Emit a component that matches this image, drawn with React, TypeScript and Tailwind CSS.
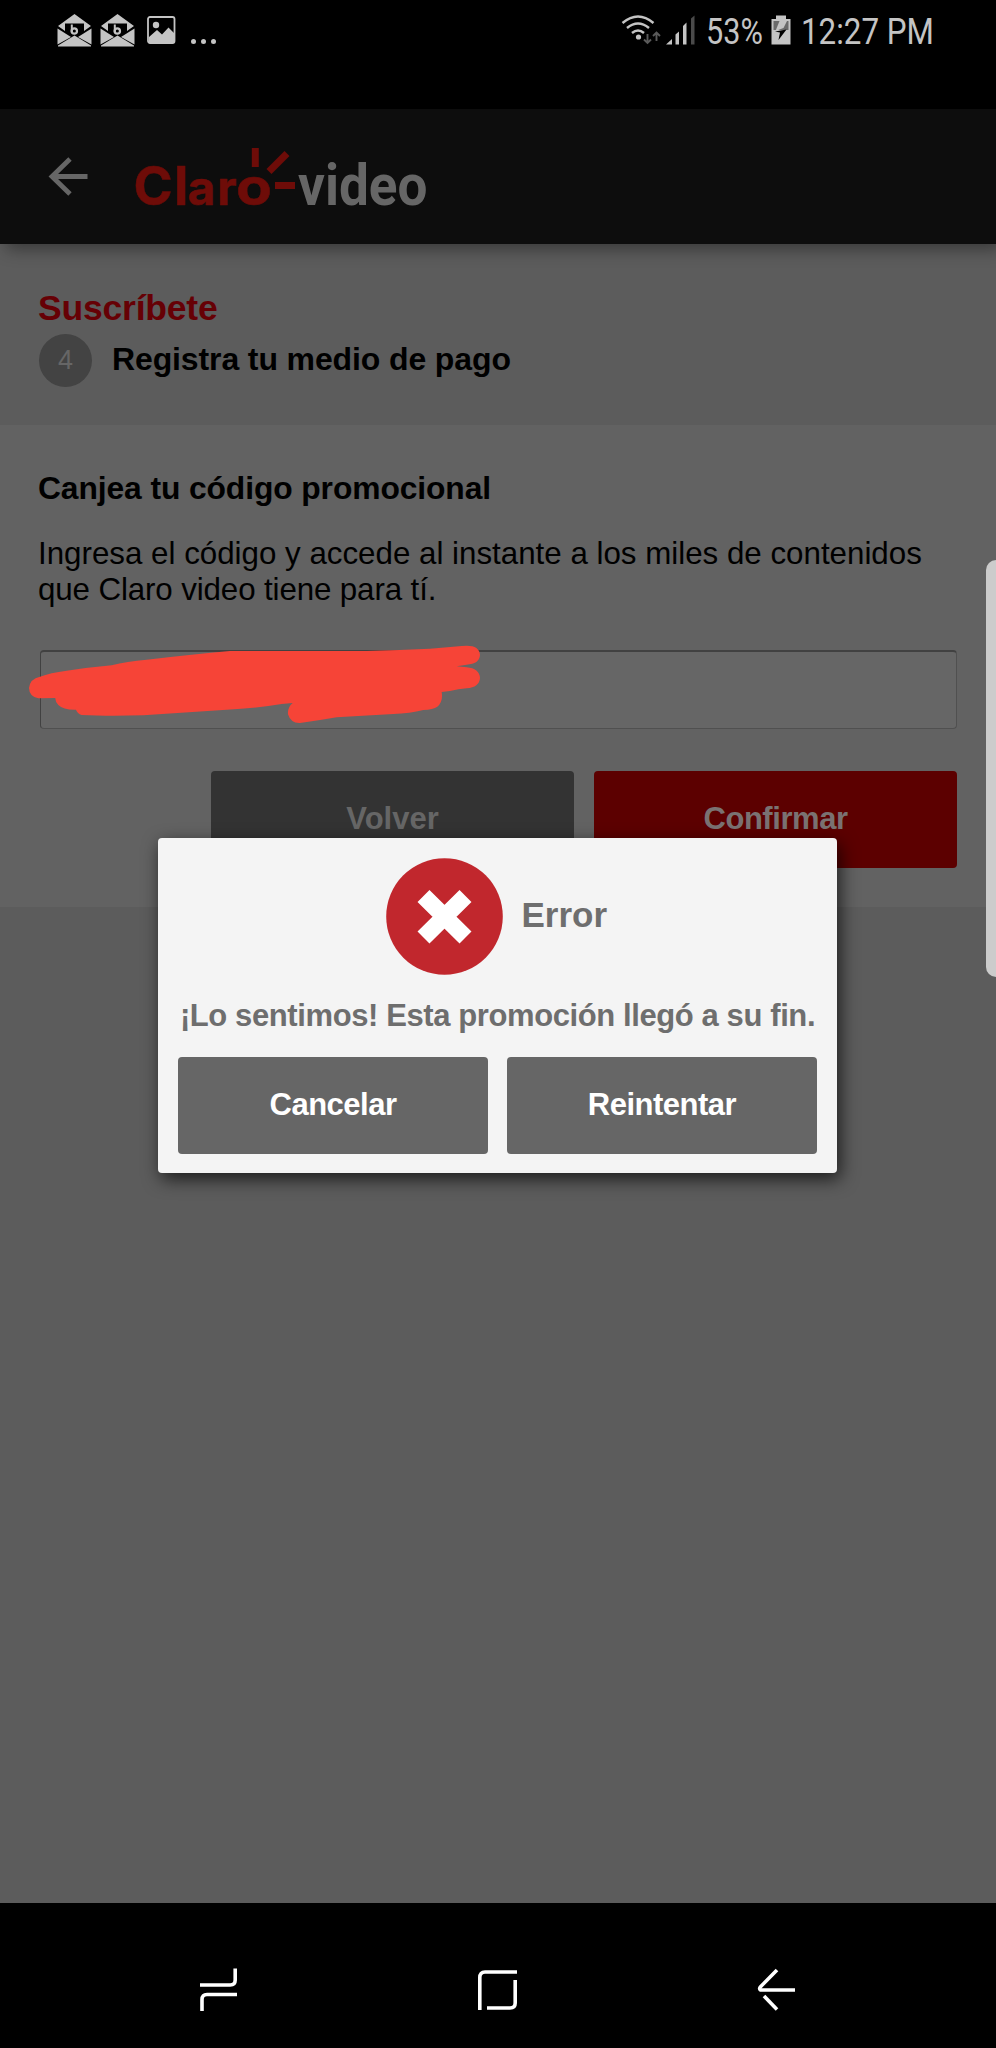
import { ReactNode } from "react"

function EnvelopeIcon() {
  return (
    <svg width="35" height="33" viewBox="0 0 35 33" fill="#c4c4c4">
      <path d="M17.5 0 L34 12 L27 17 V9.500 H8 V17 L1 12 Z" />
      <path d="M0.500 14.500 L14 23 L0.500 30.500 Z" />
      <path d="M34.500 14.500 L21 23 L34.500 30.500 Z" />
      <path d="M1 32.500 V31.500 L17.500 21.500 L34 31.500 V32.500 Z" />
      <path d="M14.800 10.500 V18" fill="none" stroke="#c4c4c4" strokeWidth="2" />
      <circle cx="17.300" cy="17" r="2.700" fill="none" stroke="#c4c4c4" strokeWidth="2.200" />
    </svg>
  )
}

function GalleryIcon() {
  return (
    <svg width="29" height="28" viewBox="0 0 29 28">
      <rect x="1" y="1" width="26.500" height="26" rx="2" fill="none" stroke="#c4c4c4" strokeWidth="1.800" />
      <circle cx="9" cy="9" r="3.200" fill="#c4c4c4" />
      <path d="M2 21 L10 14 L15 18.500 L21.500 11.500 L27 17 V26 H2 Z" fill="#c4c4c4" />
    </svg>
  )
}

function StatusIcons() {
  return (
    <svg className="absolute left-[621px] top-0" width="76" height="60" viewBox="0 0 76 60" fill="none">
      <g stroke="#c4c4c4" strokeWidth="2.500">
        <path d="M1.500 23 Q17 10 32.500 23" />
        <path d="M6 28 Q17 19 28 28" />
        <path d="M11 33 Q17 28 23 33" />
      </g>
      <circle cx="17.500" cy="37" r="2.600" fill="#c4c4c4" />
      <g stroke="#5a5a5a" strokeWidth="1.900">
        <path d="M26.500 34 V43 M23 39.500 L26.500 43 L30 39.500" />
        <path d="M35.500 41 V32.500 M32 36 L35.500 32.500 L39 36" />
      </g>
      <path d="M45 44.500 L51 39 V44.500 Z" fill="#c4c4c4" />
      <path d="M54.500 34.500 L58 31.500 V44.500 H54.500 Z" fill="#c4c4c4" />
      <path d="M62 26 L65.500 22.500 V44.500 H62 Z" fill="#c4c4c4" />
      <path d="M70 18.500 L73.500 15.500 V44.500 H70 Z" fill="#4a4a4a" />
    </svg>
  )
}

function BatteryIcon() {
  return (
    <svg className="absolute left-[771px] top-[15px]" width="20" height="30" viewBox="0 0 20 30">
      <path d="M5 0.500 H15 V4 H19.500 V29.500 H0.500 V4 H5 Z" fill="#c4c4c4" />
      <path d="M2.500 6 H17.500 V15 H2.500 Z" fill="#6a6a6a" />
      <path d="M8.500 6 L16 6 L12.500 13 L4.500 16 Z" fill="#c4c4c4" />
      <path d="M4 16.500 L15.500 14.500 L7.500 25 L9 17.500 Z" fill="#000" />
    </svg>
  )
}

function StatusBar() {
  return (
    <div className="relative h-[109px] bg-black font-[Roboto,sans-serif] text-[36px] leading-[64px] text-[#c4c4c4]">
      <div className="flex pl-[57px] pt-[14px]">
        <EnvelopeIcon />
        <div className="w-[8px]" />
        <EnvelopeIcon />
        <div className="w-[12px]" />
        <div className="pt-[2px]">
          <GalleryIcon />
        </div>
        <div className="ml-[15px] mt-[25px] flex gap-[5px]">
          <span className="size-[5px] rounded-full bg-[#c4c4c4]" />
          <span className="size-[5px] rounded-full bg-[#c4c4c4]" />
          <span className="size-[5px] rounded-full bg-[#c4c4c4]" />
        </div>
      </div>
      <StatusIcons />
      <span className="absolute left-[706px] top-0 origin-left scale-x-[0.85]">53%</span>
      <BatteryIcon />
      <span className="absolute left-[801px] top-0 origin-left scale-x-[0.87] whitespace-nowrap">12:27 PM</span>
    </div>
  )
}

function Logo() {
  return (
    <svg width="320" height="120" viewBox="130 115 320 120">
      <g fill="#6e0c08" stroke="#6e0c08" fontFamily="Inter, sans-serif" fontSize="48" fontWeight="700" strokeWidth="0.5">
        <text y="204.500" x="133.500" fontSize="53">C</text>
        <text y="204.500" x="174" fontSize="53">l</text>
        <text y="204.500" x="187.500">a</text>
        <text y="204.500" x="217">r</text>
        <text y="204.500" x="236" textLength="36" lengthAdjust="spacingAndGlyphs" fontSize="52">o</text>
      </g>
      <g stroke="#6e0c08" strokeWidth="7">
        <path d="M255.300 148 V167" />
        <path d="M269 171.500 L287 153.500" />
        <path d="M275 185.500 H295" />
      </g>
      <text x="298" y="204.500" textLength="129.500" lengthAdjust="spacingAndGlyphs" fill="#666" fontFamily="Roboto, sans-serif" fontSize="57" fontWeight="700">
        video
      </text>
    </svg>
  )
}

function Header() {
  return (
    <header className="relative z-10 flex h-[135px] bg-[#0d0d0d] pl-[48px] shadow-[6px_5px_16px_rgba(0,0,0,0.4)]">
      <svg className="mt-[48px]" width="40" height="40" viewBox="0 0 40 40" fill="none" stroke="#666" strokeWidth="4.800">
        <path d="M39.500 19.500 H4 M22 2 L4 19.500 L22 37" />
      </svg>
      <div className="ml-[42px] mt-[6px]">
        <Logo />
      </div>
    </header>
  )
}

function ModalButton({ children }: { children: ReactNode }) {
  return (
    <button className="h-[97px] flex-1 rounded-[4px] bg-[#666] text-[31px] font-bold tracking-[-0.5px] text-white">
      {children}
    </button>
  )
}

function ErrorModal() {
  return (
    <div className="absolute left-[158px] top-[838px] z-20 h-[335px] w-[679px] rounded-[4px] bg-[#f4f4f4] px-5 pt-5 text-[#6e6e6e] shadow-[3px_6px_18px_rgba(0,0,0,0.7)]">
      <div className="flex items-center pl-[208px]">
        <svg width="117" height="117" viewBox="0 0 117 117">
          <circle cx="58.500" cy="58.500" r="58.300" fill="#c1272d" />
          <path d="M37.500 38 L79.500 79.500 M79.500 38 L37.500 79.500" stroke="#fff" strokeWidth="17" />
        </svg>
        <h2 className="ml-[18.500px] pb-[3px] text-[35px] font-bold">Error</h2>
      </div>
      <p className="mt-[21px] whitespace-nowrap text-center text-[31px] leading-[40px] font-bold tracking-[-0.4px]">
        ¡Lo sentimos! Esta promoción llegó a su fin.
      </p>
      <div className="mt-[21px] flex gap-[19px]">
        <ModalButton>Cancelar</ModalButton>
        <ModalButton>Reintentar</ModalButton>
      </div>
    </div>
  )
}

function Scribble() {
  return (
    <svg className="absolute left-0 top-[620px] z-10" width="500" height="130" viewBox="0 0 1500 390">
      <path
        fill="#f64437"
        d="M120 170 Q150 158 200 152 Q270 142 335 136 Q380 124 440 119 Q580 103 690 93 L1100 93 Q1200 90 1290 86 L1385 78 Q1438 72 1440 105 Q1438 132 1400 134 L1370 139 L1400 142 Q1438 145 1440 174 Q1438 202 1400 205 L1375 208 Q1350 215 1325 216 Q1330 245 1312 260 Q1300 268 1270 270 Q1230 280 1180 282 L1010 292 Q960 301 900 309 Q872 310 864 283 Q862 262 878 249 L845 252 Q760 266 680 269 L430 286 Q320 289 245 285 Q232 280 228 269 Q190 270 175 255 Q165 244 166 234 L115 235 Q88 230 87 204 Q90 176 120 170 Z"
      />
    </svg>
  )
}

function NavBar() {
  return (
    <div className="flex h-[145px] items-start bg-black pl-[199px] pt-[64px]">
      <svg width="40" height="46" viewBox="0 0 40 46" fill="none" stroke="#fff" strokeWidth="3.600">
        <path d="M36.200 1.500 V13 Q36.200 18 31.200 18 H1" />
        <path d="M38 27.500 H8 Q3 27.500 3 32.500 V44" />
      </svg>
      <svg className="ml-[238px]" width="42" height="46" viewBox="0 0 42 46" fill="none" stroke="#fff" strokeWidth="3.600">
        <path d="M40 5 H8 Q2.800 5 2.800 10.500 V43" />
        <path d="M38.200 13 V36 Q38.200 41 33 41 H10" />
      </svg>
      <svg className="ml-[238px]" width="40" height="46" viewBox="0 0 40 46" fill="none" stroke="#fff" strokeWidth="3.600">
        <path d="M38 23 H3.500 Q2 22 3.300 20 L20 3" strokeLinejoin="round" />
        <path d="M7 29 L20 42.500" />
      </svg>
    </div>
  )
}

export default function App() {
  return (
    <div className="relative flex h-[2048px] w-[996px] flex-col overflow-hidden bg-[#5c5c5c] font-['Liberation_Sans',Arial,sans-serif]">
      <StatusBar />
      <Header />

      <section className="h-[181px] pl-[38px] pt-[44px]">
        <h1 className="text-[35.500px] leading-[40px] font-bold tracking-[-0.200px] text-[#660005]">Suscríbete</h1>
        <div className="mt-[6px] flex items-center pl-px">
          <span className="flex size-[53px] items-center justify-center rounded-full bg-[#434343] text-[27px] text-[#666]">4</span>
          <span className="ml-[20px] pb-[3px] text-[32px] font-bold tracking-[-0.120px] text-black">Registra tu medio de pago</span>
        </div>
      </section>

      <section className="h-[482px] bg-[#626262] px-[38px] pt-[43px]">
        <h2 className="text-[31.800px] leading-[40px] font-bold tracking-[-0.100px] text-black">Canjea tu código promocional</h2>
        <p className="mt-[28px] whitespace-nowrap text-[31.300px] leading-[36px] text-black">
          Ingresa el código y accede al instante a los miles de contenidos
          <br />
          <span className="tracking-[-0.120px]">que Claro video tiene para tí.</span>
        </p>
        <div className="mt-[42px] ml-[2px] h-[79px] w-[917px] rounded-[4px] border border-t-2 border-[#505050] border-t-[#414141] border-l-[#414141] bg-[#666]" />
        <div className="mt-[42px] mr-px flex justify-end gap-[20px]">
          <button className="h-[97px] w-[363px] rounded-[4px] bg-[#333] text-[31px] font-bold text-[#666]">Volver</button>
          <button className="h-[97px] w-[363px] rounded-[4px] bg-[#5c0000] text-[31px] font-bold tracking-[-0.450px] text-[#7a7272]">Confirmar</button>
        </div>
      </section>

      <div className="flex-1" />
      <NavBar />

      <Scribble />
      <ErrorModal />
      {/* edge panel handle */}
      <div className="absolute left-[986px] top-[560px] z-10 h-[417px] w-[10px] rounded-l-[12px] bg-[#ccc]" />
    </div>
  )
}
